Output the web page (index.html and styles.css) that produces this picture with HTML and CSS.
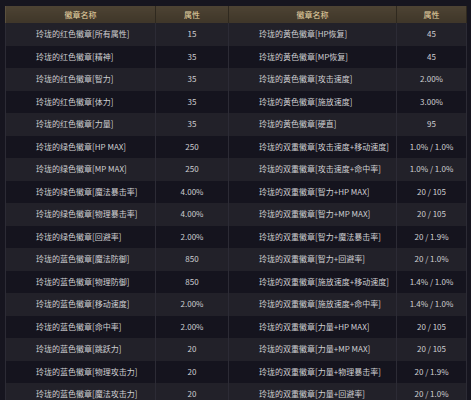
FILE: index.html
```html
<!DOCTYPE html>
<html lang="zh">
<head>
<meta charset="utf-8">
<link rel="stylesheet" href="styles.css">
</head>
<body>
<div class="frame">
<table class="badges">
<colgroup><col class="c-name"><col class="c-val"><col class="c-name2"><col class="c-val2"></colgroup>
<thead>
<tr><th>徽章名称</th><th>属性</th><th>徽章名称</th><th>属性</th></tr>
</thead>
<tbody>
<tr><td class="nm">玲珑的红色徽章[所有属性]</td><td>15</td><td class="nm">玲珑的黄色徽章[HP恢复]</td><td>45</td></tr>
<tr><td class="nm">玲珑的红色徽章[精神]</td><td>35</td><td class="nm">玲珑的黄色徽章[MP恢复]</td><td>45</td></tr>
<tr><td class="nm">玲珑的红色徽章[智力]</td><td>35</td><td class="nm">玲珑的黄色徽章[攻击速度]</td><td>2.00%</td></tr>
<tr><td class="nm">玲珑的红色徽章[体力]</td><td>35</td><td class="nm">玲珑的黄色徽章[施放速度]</td><td>3.00%</td></tr>
<tr><td class="nm">玲珑的红色徽章[力量]</td><td>35</td><td class="nm">玲珑的黄色徽章[硬直]</td><td>95</td></tr>
<tr><td class="nm">玲珑的绿色徽章[HP MAX]</td><td>250</td><td class="nm">玲珑的双重徽章[攻击速度+移动速度]</td><td>1.0% / 1.0%</td></tr>
<tr><td class="nm">玲珑的绿色徽章[MP MAX]</td><td>250</td><td class="nm">玲珑的双重徽章[攻击速度+命中率]</td><td>1.0% / 1.0%</td></tr>
<tr><td class="nm">玲珑的绿色徽章[魔法暴击率]</td><td>4.00%</td><td class="nm">玲珑的双重徽章[智力+HP MAX]</td><td>20 / 105</td></tr>
<tr><td class="nm">玲珑的绿色徽章[物理暴击率]</td><td>4.00%</td><td class="nm">玲珑的双重徽章[智力+MP MAX]</td><td>20 / 105</td></tr>
<tr><td class="nm">玲珑的绿色徽章[回避率]</td><td>2.00%</td><td class="nm">玲珑的双重徽章[智力+魔法暴击率]</td><td>20 / 1.9%</td></tr>
<tr><td class="nm">玲珑的蓝色徽章[魔法防御]</td><td>850</td><td class="nm">玲珑的双重徽章[智力+回避率]</td><td>20 / 1.0%</td></tr>
<tr><td class="nm">玲珑的蓝色徽章[物理防御]</td><td>850</td><td class="nm">玲珑的双重徽章[施放速度+移动速度]</td><td>1.4% / 1.0%</td></tr>
<tr><td class="nm">玲珑的蓝色徽章[移动速度]</td><td>2.00%</td><td class="nm">玲珑的双重徽章[施放速度+命中率]</td><td>1.4% / 1.0%</td></tr>
<tr><td class="nm">玲珑的蓝色徽章[命中率]</td><td>2.00%</td><td class="nm">玲珑的双重徽章[力量+HP MAX]</td><td>20 / 105</td></tr>
<tr><td class="nm">玲珑的蓝色徽章[跳跃力]</td><td>20</td><td class="nm">玲珑的双重徽章[力量+MP MAX]</td><td>20 / 105</td></tr>
<tr><td class="nm">玲珑的蓝色徽章[物理攻击力]</td><td>20</td><td class="nm">玲珑的双重徽章[力量+物理暴击率]</td><td>20 / 1.9%</td></tr>
<tr><td class="nm">玲珑的蓝色徽章[魔法攻击力]</td><td>20</td><td class="nm">玲珑的双重徽章[力量+回避率]</td><td>20 / 1.0%</td></tr>
</tbody>
</table>
</div>
</body>
</html>
```
FILE: styles.css
```css
html, body {
  margin: 0;
  padding: 0;
  background: #16151f;
  overflow: hidden;
}
.frame {
  padding: 6px 0 0 5px;
  width: 466px;
}
.badges {
  border-collapse: collapse;
  table-layout: fixed;
  width: 461px;
  font-family: "Noto Sans CJK SC", "Noto Sans", sans-serif;
  font-size: 8px;
  color: #cfcfd2;
  border-left: 1px solid #2b2a34;
  border-right: 1px solid #34333c;
}
.c-name { width: 150px; }
.c-val { width: 73px; }
.c-name2 { width: 168px; }
.c-val2 { width: 70px; }
.badges th {
  height: 17px;
  padding: 0;
  background: linear-gradient(#4d4333, #3f3629);
  color: #e9d7a6;
  font-weight: normal;
  text-align: center;
  border-left: 1px solid #5a503e;
  border-right: 1px solid #2f291f;
}
.badges td {
  height: 22.5px;
  padding: 0;
  line-height: 10px;
  text-align: center;
  border-left: 1px solid #2c2b35;
  border-right: 1px solid #2c2b35;
  white-space: nowrap;
}
.badges td.nm {
  text-align: left;
  padding-left: 30px;
}
.badges tbody tr:nth-child(odd) td {
  background: #222129;
}
.badges tbody tr:nth-child(even) td {
  background: #15141e;
}
```
